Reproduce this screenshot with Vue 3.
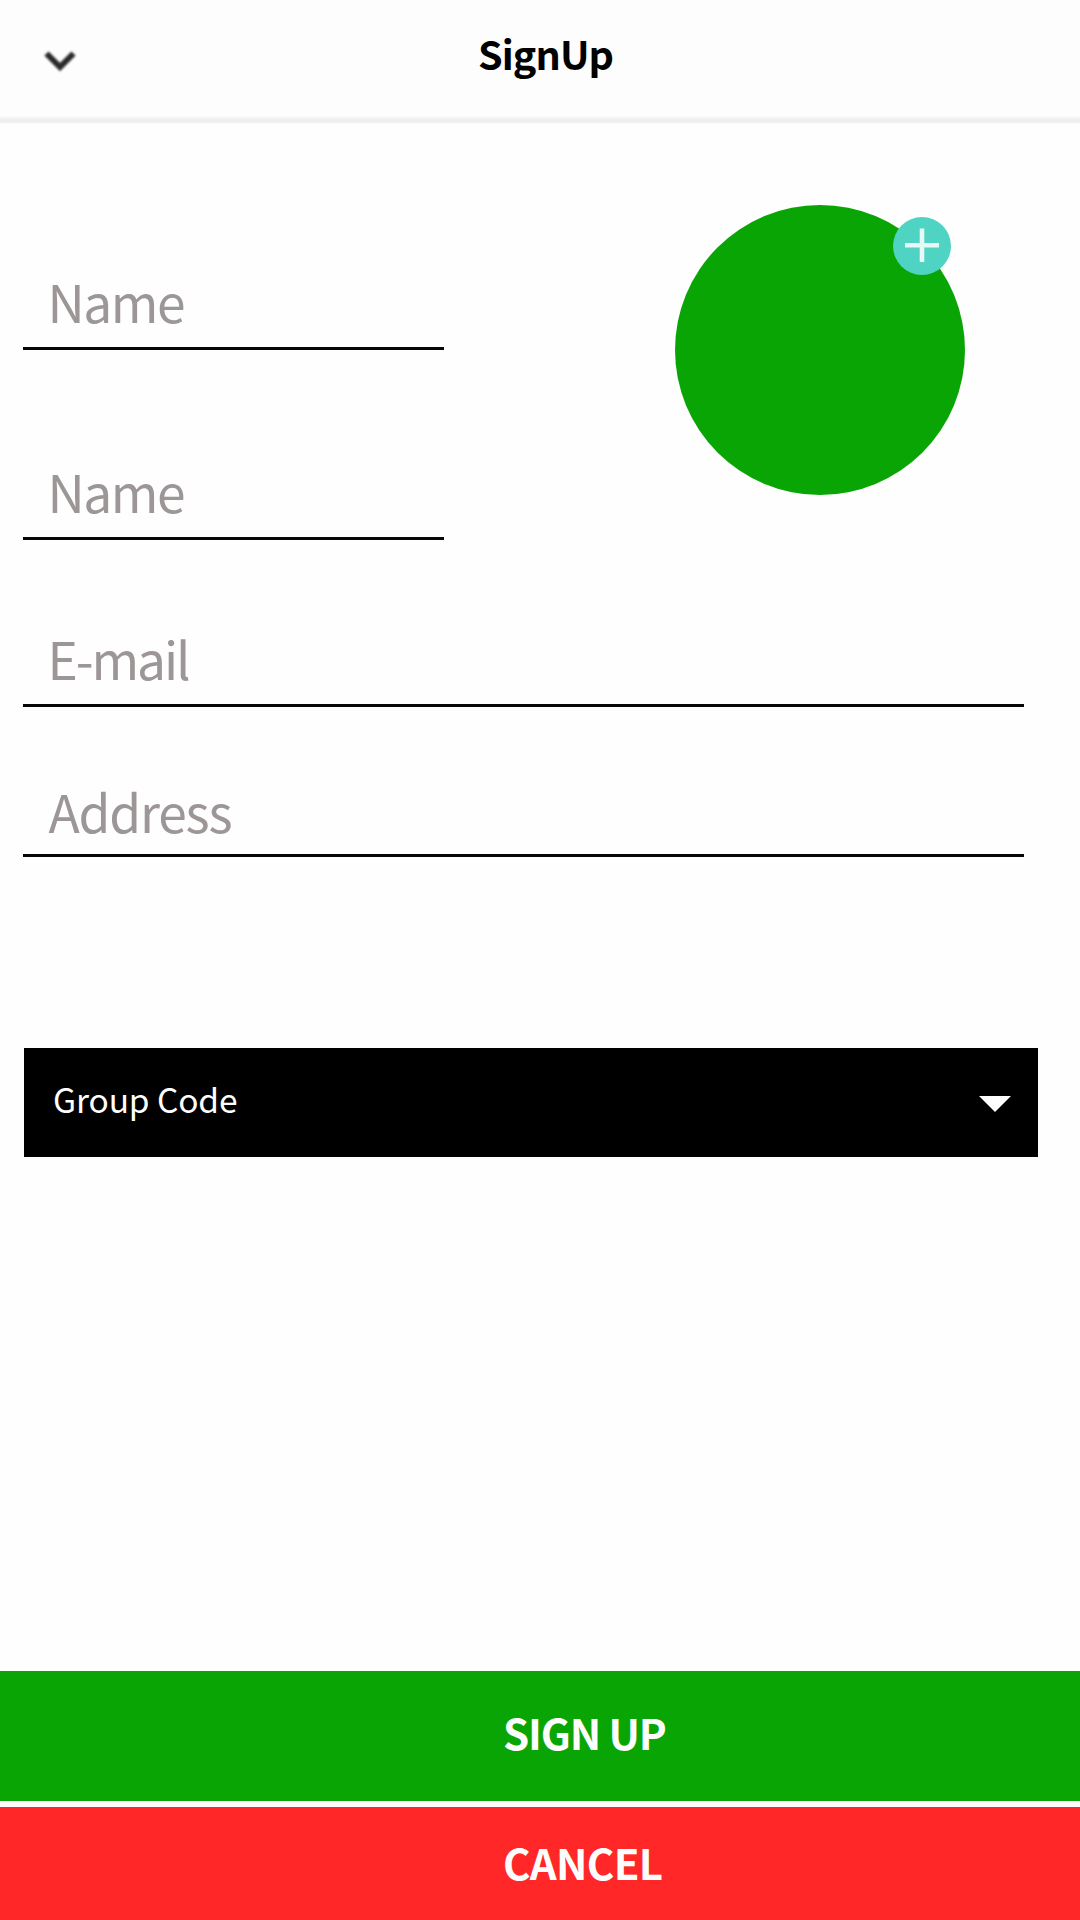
<script setup>
const nameFields = [
  { id: 'first', label: 'Name' },
  { id: 'last', label: 'Name' },
]
const wideFields = [
  { id: 'email', label: 'E-mail' },
  { id: 'address', label: 'Address' },
]
</script>

<template>
  <div class="screen">
    <header class="header">
      <svg class="chevron" width="40" height="30" viewBox="0 0 40 30">
        <path d="M6.5 7.5 L20 21 L33.5 7.5" />
      </svg>
      <h1 class="title">SignUp</h1>
    </header>

    <main class="form">
      <div class="profile">
        <div class="names">
          <div v-for="f in nameFields" :key="f.id" class="field" :class="f.id">
            <span class="label">{{ f.label }}</span>
          </div>
        </div>
        <div class="avatar">
          <button class="add" aria-label="Add photo">
            <svg width="58" height="58" viewBox="0 0 58 58">
              <path d="M12 28.2 H46 M29 11.5 V45" />
            </svg>
          </button>
        </div>
      </div>

      <div v-for="f in wideFields" :key="f.id" class="field" :class="f.id">
        <span class="label">{{ f.label }}</span>
      </div>

      <div class="select">
        <span class="select-text">Group Code</span>
        <svg class="caret" width="33" height="17" viewBox="0 0 33 17">
          <path d="M0 0 H32 L16 16 Z" />
        </svg>
      </div>
    </main>

    <footer class="actions">
      <button class="btn signup"><span>SIGN UP</span></button>
      <button class="btn cancel"><span>CANCEL</span></button>
    </footer>
  </div>
</template>

<style>
body {
  margin: 0;
  background: #fefefe;
}
</style>

<style scoped>
.screen {
  width: 1080px;
  height: 1920px;
  display: flex;
  flex-direction: column;
  background: #fefefe;
  font-family: "Noto Sans CJK SC", "Open Sans", sans-serif;
  overflow: hidden;
}
button {
  border: 0;
  padding: 0;
  font: inherit;
}
.header {
  box-sizing: border-box;
  height: 124px;
  display: flex;
  align-items: flex-start;
  background: linear-gradient(#fdfdfd 116px, #f4f4f4 118px, #eeeeee 119px, #eeeeee 122px, #f6f6f6 123px, #fefefe 124px);
}
.chevron {
  margin: 46px 0 0 39.5px;
  fill: none;
  stroke: #2b2b2b;
  stroke-width: 6;
  filter: blur(0.9px);
}
.title {
  margin: 23px 0 0 398.5px;
  font-size: 39.5px;
  line-height: 60px;
  font-weight: 700;
  letter-spacing: -0.9px;
  color: #000;
}
.form {
  flex: 1;
  display: flex;
  flex-direction: column;
  align-items: flex-start;
  padding-left: 23px;
}
.profile {
  display: flex;
}
.names {
  width: 421px;
}
.field {
  box-sizing: border-box;
  display: flex;
  align-items: flex-end;
  width: 1001px;
  padding: 0 0 16px 24.5px;
  border-bottom: 3px solid #070707;
}
.field.first {
  width: 421px;
  height: 226px;
}
.field.last {
  width: 421px;
  height: 190px;
}
.field.email {
  height: 167px;
  letter-spacing: -2.1px;
}
.field.address {
  height: 150px;
  padding: 0 0 13px 25.5px;
  letter-spacing: -1.2px;
}
.field.first,
.field.last {
  letter-spacing: -1.5px;
}
.label {
  font-size: 51.5px;
  line-height: 60px;
  color: #9d9696;
  white-space: nowrap;
}
.avatar {
  position: relative;
  width: 290px;
  height: 290px;
  margin: 81px 0 0 231px;
  border-radius: 50%;
  background: #09a505;
}
.add {
  position: absolute;
  top: 12px;
  left: 218px;
  width: 58px;
  height: 58px;
  border-radius: 50%;
  background: #4fd3c2;
}
.add svg {
  display: block;
  fill: none;
  stroke: #e6f9f6;
  stroke-width: 4.6;
  filter: blur(0.5px);
}
.select {
  box-sizing: border-box;
  display: flex;
  align-items: center;
  justify-content: space-between;
  width: 1014px;
  height: 109px;
  margin: 191px 0 0 1px;
  padding: 0 26px 0 29px;
  background: #000;
}
.select-text {
  font-size: 33.5px;
  line-height: 60px;
  letter-spacing: -0.12px;
  color: #fff;
  padding-bottom: 7px;
}
.caret {
  fill: #fff;
  margin-top: 4px;
}
.actions {
  display: flex;
  flex-direction: column;
  gap: 6px;
}
.btn {
  display: flex;
  align-items: flex-start;
  padding-left: 503px;
  font-size: 42px;
  line-height: 60px;
  font-weight: 700;
  color: #fdfdfd;
}
.signup {
  height: 130px;
  padding-top: 31px;
  letter-spacing: -1.15px;
  background: #09a505;
}
.cancel {
  height: 113px;
  padding-top: 25px;
  letter-spacing: -0.7px;
  background: #ff2727;
}
</style>
